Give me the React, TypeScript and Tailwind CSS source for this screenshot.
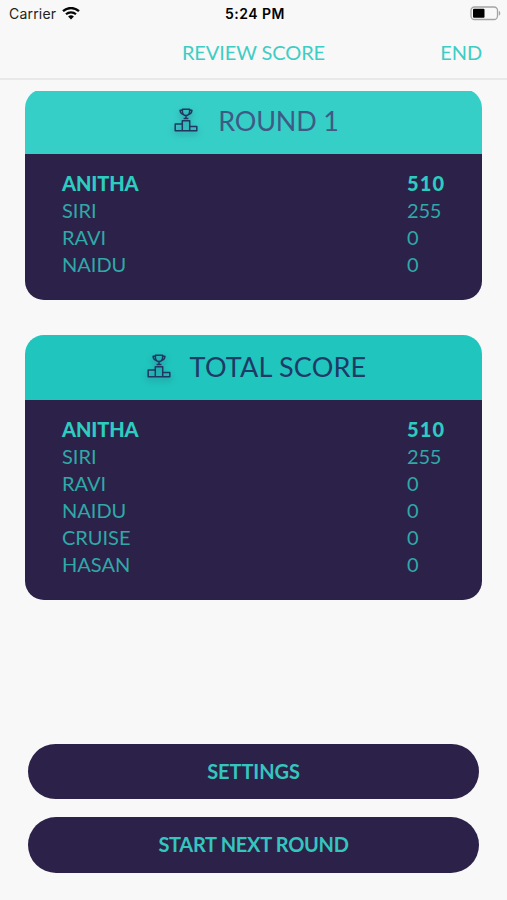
import clsx from "clsx";

type Score = { name: string; points: number };

const roundScores: Score[] = [
  { name: "ANITHA", points: 510 },
  { name: "SIRI", points: 255 },
  { name: "RAVI", points: 0 },
  { name: "NAIDU", points: 0 },
];

const totalScores: Score[] = [
  ...roundScores,
  { name: "CRUISE", points: 0 },
  { name: "HASAN", points: 0 },
];

function WifiIcon() {
  return (
    <svg className="ml-1.5 h-3.5 w-[18px]" viewBox="0 0 18 14" fill="none" stroke="#050505">
      <path d="M1 4.2a11.6 11.6 0 0 1 16 0" strokeWidth="2.3" />
      <path d="M4 7.3a7.3 7.3 0 0 1 10 0" strokeWidth="2.2" />
      <path d="M9 12.5 6.1 9.6a4.2 4.2 0 0 1 5.8 0Z" fill="#050505" stroke="none" />
    </svg>
  );
}

function BatteryIcon() {
  return (
    <svg className="h-4 w-[31px]" viewBox="0 0 31 16" fill="none">
      <rect x="1" y="1" width="26.5" height="12.5" rx="3.5" stroke="#a3a3a3" strokeWidth="1.3" />
      <rect x="3" y="2.8" width="11.5" height="9" rx="1" fill="#000" />
      <path d="M28.8 4.800c2 .8 2 4.200 0 5Z" fill="#a3a3a3" />
    </svg>
  );
}

function PodiumIcon() {
  return (
    <svg
      className="mb-1 h-6 w-6 drop-shadow-[0_3px_3px_rgba(43,33,72,0.35)]"
      viewBox="0 0 24 24"
      fill="none"
      stroke="#1f3763"
      strokeWidth="1.5"
      strokeLinejoin="round"
    >
      <path d="M8.4 1.2h7.2v2.3c0 2.4-1.6 4-3.6 4s-3.6-1.6-3.6-4Z" />
      <path d="M8.4 2.2H6.1c0 2.3 1.3 3.7 3.4 4M15.6 2.2h2.3c0 2.3-1.3 3.700-3.400 4" />
      <path d="M12 7.500v3M9.600 10.500h4.800" />
      <path d="M1.200 15.900h7.100v6.900H1.200ZM8.300 12.700h7.400v10.100H8.300ZM15.700 18.600h7.100v4.200h-7.100Z" />
    </svg>
  );
}

type ScoreCardProps = {
  title: string;
  scores: Score[];
  headerClass: string;
  titleClass: string;
};

function ScoreCard({ title, scores, headerClass, titleClass }: ScoreCardProps) {
  return (
    <section className="overflow-hidden rounded-[19px]">
      <header className={clsx("flex h-[65px] items-center justify-center", headerClass)}>
        <PodiumIcon />
        <h2 className={clsx("pb-0.5 text-[27px] leading-8", titleClass)}>{title}</h2>
      </header>
      <ul className="bg-[#2c2148] pt-[15px] pr-9 pb-[23px] pl-[37px]">
        {scores.map(({ name, points }, index) => (
          <li
            key={name}
            className={clsx(
              "flex h-[27px] items-center justify-between text-xl",
              index === 0 ? "font-black text-[#2cccc1]" : "text-[#2fa9a7]",
            )}
          >
            <span className={clsx(index === 0 && "tracking-[-0.1px]")}>{name}</span>
            <span className={clsx("w-[39px]", index === 0 ? "tracking-[1.2px]" : "tracking-[-0.2px]")}>
              {points}
            </span>
          </li>
        ))}
      </ul>
    </section>
  );
}

export default function App() {
  return (
    <main className="flex h-[900px] w-full flex-col bg-[#f8f8f8] font-['Lato',sans-serif]">
      <div className="grid h-7 grid-cols-3 items-center pr-1.5 pl-[9px] font-['Inter',sans-serif] text-sm text-[#222]">
        <div className="flex items-center">
          <span className="tracking-[0.2px]">Carrier</span>
          <WifiIcon />
        </div>
        <span className="text-center font-semibold tracking-[0.5px] text-black">5:24 PM</span>
        <div className="flex justify-end">
          <BatteryIcon />
        </div>
      </div>

      <nav className="grid h-[52px] grid-cols-[1fr_auto_1fr] items-center border-b-2 border-[#e9e9e9] px-[25px] pb-0.5 text-xl tracking-[-0.1px] text-[#3ecdc4]">
        <h1 className="col-start-2">REVIEW SCORE</h1>
        <button className="justify-self-end">END</button>
      </nav>

      <div className="mt-[11px] h-[640px] overflow-hidden px-[25px]">
        <div className="-mt-0.5 flex flex-col gap-[35px]">
          <ScoreCard
            title="ROUND 1"
            scores={roundScores}
            headerClass="bg-[#36cfc8] gap-5 pl-1.5"
            titleClass="tracking-[-0.2px] text-[#3f5b85]"
          />
          <ScoreCard
            title="TOTAL SCORE"
            scores={totalScores}
            headerClass="bg-[#20c5be] gap-[19px] pl-1.5"
            titleClass="tracking-[0.2px] text-[#1f3a66]"
          />
        </div>
      </div>

      <div className="mt-[13px] flex flex-col gap-[18px] px-7 text-xl font-bold text-[#34c5bf]">
        <button className="h-[55px] rounded-full bg-[#2c2148] pb-0.5 tracking-[-0.1px]">
          SETTINGS
        </button>
        <button className="h-14 rounded-full bg-[#2c2148] pb-0.5 tracking-[-0.3px]">
          START NEXT ROUND
        </button>
      </div>
    </main>
  );
}
